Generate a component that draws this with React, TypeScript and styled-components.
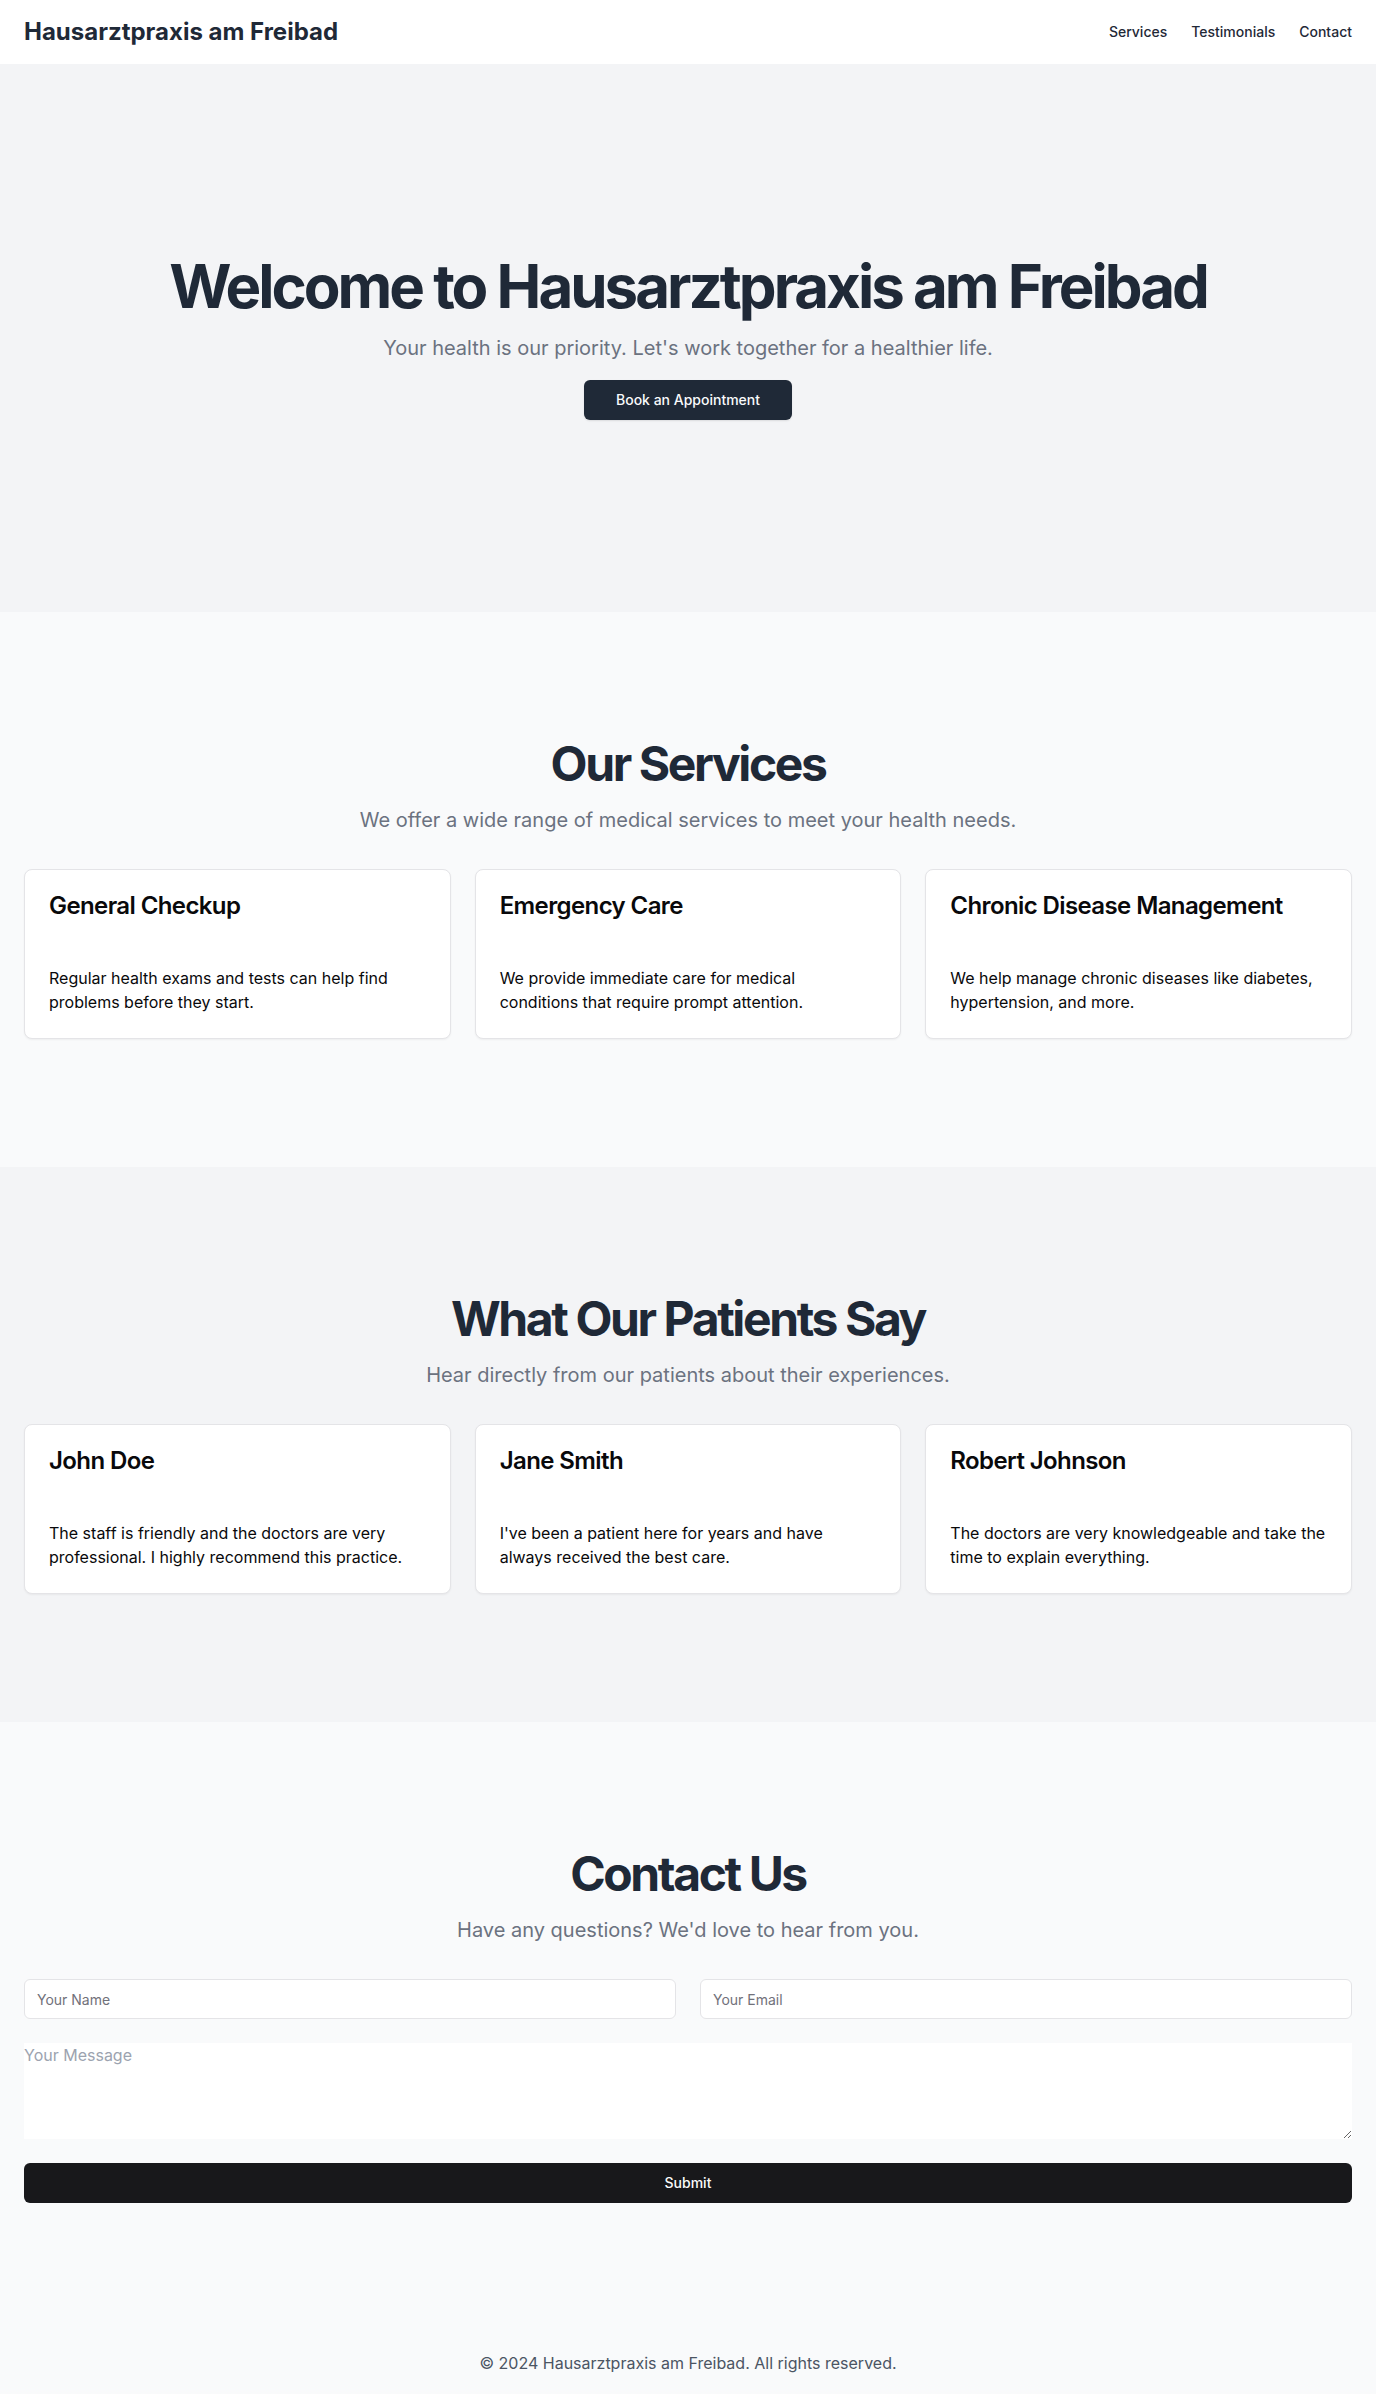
import React from "react";
import styled, { createGlobalStyle } from "styled-components";

const GlobalStyle = createGlobalStyle`
  *, *::before, *::after {
    box-sizing: border-box;
  }

  body {
    margin: 0;
    background: #f9fafb;
    color: #09090b;
    font-family: Inter, "Liberation Sans", sans-serif;
    font-size: 16px;
    line-height: 24px;
  }

  h1, h2, h3, p {
    margin: 0;
  }
`;

const Header = styled.header`
  display: flex;
  align-items: center;
  justify-content: space-between;
  flex-wrap: wrap;
  gap: 8px 24px;
  padding: 16px 24px;
  background: #ffffff;
`;

const Brand = styled.a`
  color: #1f2937;
  font-size: 24px;
  line-height: 32px;
  font-weight: 700;
  text-decoration: none;
`;

const Nav = styled.nav`
  display: flex;
  gap: 24px;
`;

const NavLink = styled.a`
  color: #1f2937;
  font-size: 14px;
  line-height: 20px;
  font-weight: 500;
  text-decoration: none;

  &:hover {
    text-decoration: underline;
  }
`;

const Section = styled.section<{ $muted?: boolean }>`
  display: flex;
  flex-direction: column;
  gap: 32px;
  padding: 128px 24px;
  background: ${({ $muted }) => ($muted ? "#f3f4f6" : "#f9fafb")};
`;

const Hero = styled(Section)`
  padding: 192px 24px;
`;

const Intro = styled.div`
  display: flex;
  flex-direction: column;
  align-items: center;
  gap: 16px;
  text-align: center;
`;

const HeroTitle = styled.h1`
  color: #1f2937;
  font-size: 60px;
  line-height: 60px;
  font-weight: 700;
  letter-spacing: -0.05em;
`;

const SectionTitle = styled.h2`
  color: #1f2937;
  font-size: 48px;
  line-height: 48px;
  font-weight: 700;
  letter-spacing: -0.05em;
`;

const Lead = styled.p`
  color: #6b7280;
  font-size: 20px;
  line-height: 33px;
`;

const HeroLead = styled(Lead)`
  line-height: 32px;
`;

const Button = styled.button`
  height: 40px;
  padding: 0 32px;
  border: 0;
  border-radius: 6px;
  background: #18181b;
  color: #fafafa;
  font-family: inherit;
  font-size: 14px;
  line-height: 20px;
  font-weight: 500;
  cursor: pointer;
`;

const HeroButton = styled(Button)`
  background: #1f2937;
  color: #f9fafb;
  box-shadow: 0 1px 2px rgba(0, 0, 0, 0.1);
`;

const CardGrid = styled.div`
  display: grid;
  grid-template-columns: repeat(3, minmax(0, 1fr));
  gap: 24px;

  @media (max-width: 900px) {
    grid-template-columns: minmax(0, 1fr);
  }
`;

const Card = styled.article`
  display: flex;
  flex-direction: column;
  gap: 48px;
  padding: 24px;
  border: 1px solid #e4e4e7;
  border-radius: 8px;
  background: #ffffff;
  box-shadow: 0 1px 2px rgba(0, 0, 0, 0.05);
`;

const CardTitle = styled.h3`
  font-size: 24px;
  line-height: 24px;
  font-weight: 600;
  letter-spacing: -0.025em;
`;

const Form = styled.form`
  display: grid;
  gap: 24px;
`;

const FieldRow = styled.div`
  display: grid;
  grid-template-columns: repeat(2, minmax(0, 1fr));
  gap: 24px;
`;

const TextField = styled.input`
  width: 100%;
  height: 40px;
  padding: 8px 12px;
  border: 1px solid #e4e4e7;
  border-radius: 6px;
  background: #ffffff;
  color: #09090b;
  font-family: inherit;
  font-size: 14px;
  line-height: 20px;

  &::placeholder {
    color: #71717a;
    opacity: 1;
  }
`;

const MessageField = styled.textarea`
  display: block;
  width: 100%;
  height: 96px;
  padding: 0;
  border: 0;
  background: #ffffff;
  color: #09090b;
  font-family: inherit;
  font-size: 16px;
  line-height: 24px;
  resize: vertical;

  &::placeholder {
    color: #9ca3af;
    opacity: 1;
  }
`;

const Footer = styled.footer`
  padding: 20px 24px 19px;
  color: #4b5563;
  text-align: center;
`;

type Entry = { title: string; text: string };

const services: Entry[] = [
  {
    title: "General Checkup",
    text: "Regular health exams and tests can help find problems before they start.",
  },
  {
    title: "Emergency Care",
    text: "We provide immediate care for medical conditions that require prompt attention.",
  },
  {
    title: "Chronic Disease Management",
    text: "We help manage chronic diseases like diabetes, hypertension, and more.",
  },
];

const testimonials: Entry[] = [
  {
    title: "John Doe",
    text: "The staff is friendly and the doctors are very professional. I highly recommend this practice.",
  },
  {
    title: "Jane Smith",
    text: "I've been a patient here for years and have always received the best care.",
  },
  {
    title: "Robert Johnson",
    text: "The doctors are very knowledgeable and take the time to explain everything.",
  },
];

function Cards({ entries }: { entries: Entry[] }) {
  return (
    <CardGrid>
      {entries.map((entry) => (
        <Card key={entry.title}>
          <CardTitle>{entry.title}</CardTitle>
          <p>{entry.text}</p>
        </Card>
      ))}
    </CardGrid>
  );
}

export default function App() {
  return (
    <>
      <GlobalStyle />
      <Header>
        <Brand href="#top">Hausarztpraxis am Freibad</Brand>
        <Nav>
          <NavLink href="#services">Services</NavLink>
          <NavLink href="#testimonials">Testimonials</NavLink>
          <NavLink href="#contact">Contact</NavLink>
        </Nav>
      </Header>
      <main>
        <Hero id="top" $muted>
          <Intro>
            <HeroTitle>Welcome to Hausarztpraxis am Freibad</HeroTitle>
            <HeroLead>
              Your health is our priority. Let's work together for a healthier life.
            </HeroLead>
            <HeroButton type="button">Book an Appointment</HeroButton>
          </Intro>
        </Hero>
        <Section id="services">
          <Intro>
            <SectionTitle>Our Services</SectionTitle>
            <Lead>We offer a wide range of medical services to meet your health needs.</Lead>
          </Intro>
          <Cards entries={services} />
        </Section>
        <Section id="testimonials" $muted>
          <Intro>
            <SectionTitle>What Our Patients Say</SectionTitle>
            <Lead>Hear directly from our patients about their experiences.</Lead>
          </Intro>
          <Cards entries={testimonials} />
        </Section>
        <Section id="contact">
          <Intro>
            <SectionTitle>Contact Us</SectionTitle>
            <Lead>Have any questions? We'd love to hear from you.</Lead>
          </Intro>
          <Form onSubmit={(event) => event.preventDefault()}>
            <FieldRow>
              <TextField type="text" name="name" placeholder="Your Name" aria-label="Your Name" />
              <TextField type="email" name="email" placeholder="Your Email" aria-label="Your Email" />
            </FieldRow>
            <MessageField name="message" placeholder="Your Message" aria-label="Your Message" />
            <Button type="submit">Submit</Button>
          </Form>
        </Section>
      </main>
      <Footer>© 2024 Hausarztpraxis am Freibad. All rights reserved.</Footer>
    </>
  );
}
